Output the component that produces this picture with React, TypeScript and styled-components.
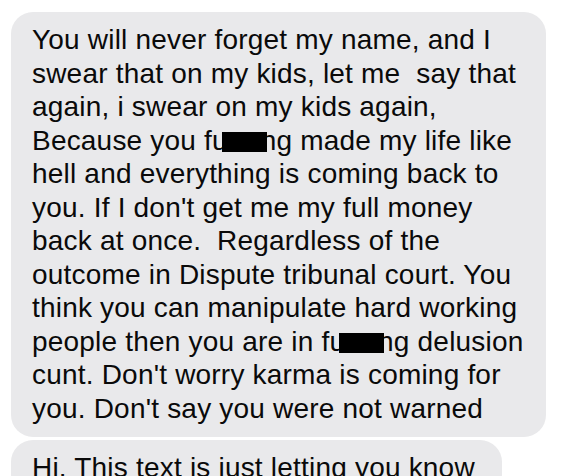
import styled, { createGlobalStyle } from "styled-components";

const GlobalStyle = createGlobalStyle`
  html, body {
    margin: 0;
    padding: 0;
    background: #ffffff;
  }
  body {
    font-family: "Liberation Sans", Arial, sans-serif;
    overflow: hidden;
  }
`;

const firstMessage: string[] = [
  "You will never forget my name, and I",
  "swear that on my kids, let me  say that",
  "again, i swear on my kids again,",
  "Because you fu[cki]ng made my life like",
  "hell and everything is coming back to",
  "you. If I don't get me my full money",
  "back at once.  Regardless of the",
  "outcome in Dispute tribunal court. You",
  "think you can manipulate hard working",
  "people then you are in fu[cki]ng delusion",
  "cunt. Don't worry karma is coming for",
  "you. Don't say you were not warned",
];

const secondMessage: string[] = ["Hi. This text is just letting you know"];

// splits "fu[cki]ng" into plain text and a blacked out part
const renderLine = (line: string) => {
  const parts = line.split(/\[|\]/);
  return parts.map((part, i) =>
    i % 2 === 1 ? (
      <Redacted key={i}>{part}</Redacted>
    ) : (
      <span key={i}>{part}</span>
    )
  );
};

const Bubble = ({ lines, $extra = 0 }: { lines: string[]; $extra?: number }): JSX.Element => (
  <BubbleBox $extra={$extra}>
    {lines.map((line, i) => (
      <Line key={i}>{renderLine(line)}</Line>
    ))}
  </BubbleBox>
);

const App = (): JSX.Element => {
  return (
    <>
      <GlobalStyle />
      <Thread>
        <Bubble lines={firstMessage} />
        <Bubble lines={secondMessage} $extra={5} />
      </Thread>
    </>
  );
};

export default App;

const Thread = styled.div`
  display: flex;
  flex-direction: column;
  align-items: flex-start;
  gap: 3px;
  padding: 12px 0 0 11px;
`;

const BubbleBox = styled.div<{ $extra: number }>`
  background: #e9e9eb;
  border-radius: 22px;
  padding: 11px ${(props) => 22 + props.$extra}px 12px 21px;
  color: #0a0a0a;
  font-size: 28px;
  line-height: 33.5px;
  letter-spacing: 0.2px;
`;

const Line = styled.div`
  white-space: pre;
`;

const Redacted = styled.span`
  display: inline-block;
  background: #000;
  color: transparent;
  height: 20px;
  line-height: 20px;
  vertical-align: -1px;
  padding: 0 5px;
  margin: 0 -6px;
  position: relative;
`;
